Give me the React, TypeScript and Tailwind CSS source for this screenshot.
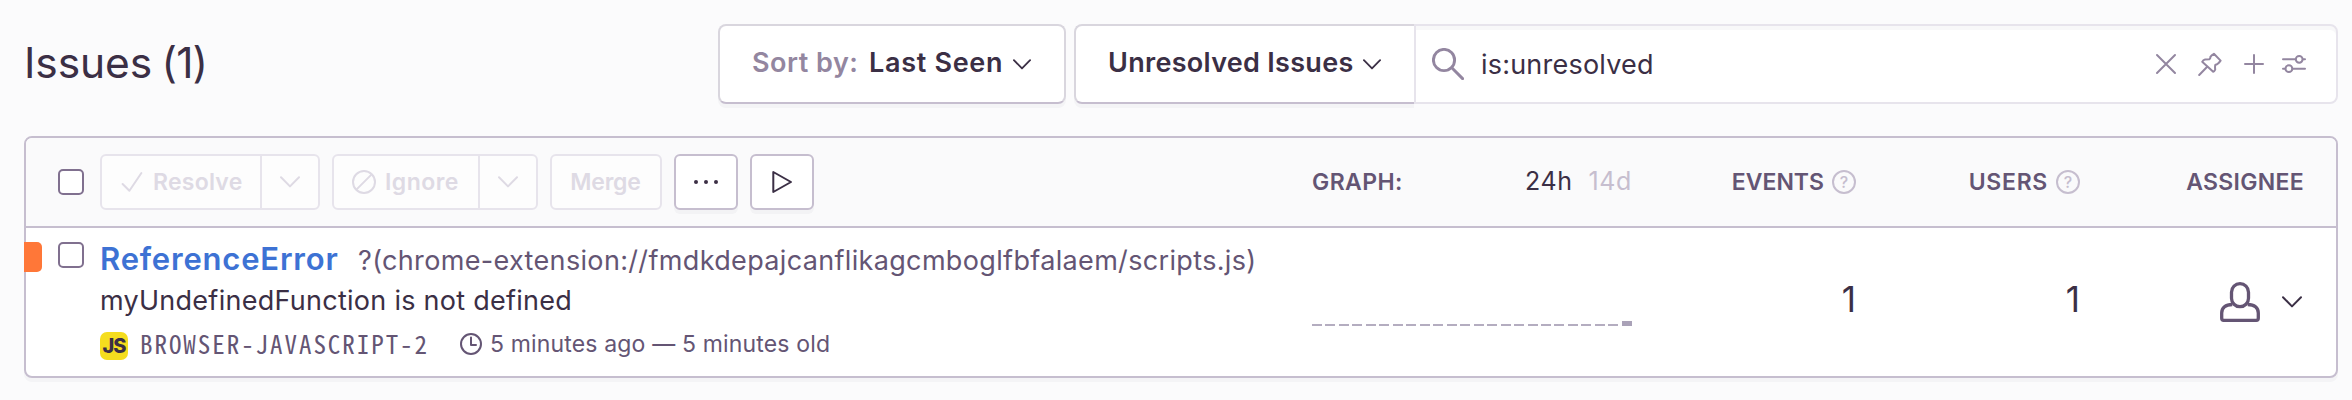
import React from "react";

function Chevron({ className, width = 20, height = 12 }: { className?: string; width?: number; height?: number }) {
  return (
    <svg viewBox="0 0 20 12" width={width} height={height} className={className} fill="none" stroke="currentColor" strokeWidth="2" strokeLinecap="round" strokeLinejoin="round">
      <path d="M1 1.2 L10 10.4 L19 1.2" />
    </svg>
  );
}

function Help() {
  return (
    <span className="flex size-6 items-center justify-center rounded-full border-2 border-[#c6becf] text-[16px] leading-none font-medium tracking-normal text-[#c6becf]">
      ?
    </span>
  );
}

function Checkbox() {
  return <span className="block size-[26px] shrink-0 rounded-[5px] border-2 border-[#80708f] bg-white" />;
}

function Toolbar() {
  return (
    <div className="flex gap-3 text-[23px] font-semibold text-[#dedae4]">
      <div className="flex h-14 w-[220px] rounded-md border-2 border-[#e7e4ec] bg-[#fdfdfd]">
        <div className="flex w-[158px] items-center gap-[9px] pl-[18px]">
          <svg viewBox="0 0 24 24" className="size-6" fill="none" stroke="currentColor" strokeWidth="2" strokeLinecap="round" strokeLinejoin="round">
            <path d="M2.6 14 L9.4 20.8 L21.4 3" />
          </svg>
          <span className="tracking-[0.24px]">Resolve</span>
        </div>
        <div className="flex flex-1 items-center justify-center border-l-2 border-[#e7e4ec]">
          <Chevron />
        </div>
      </div>
      <div className="flex h-14 w-[206px] rounded-md border-2 border-[#e7e4ec] bg-[#fdfdfd]">
        <div className="flex w-[144px] items-center gap-[9px] pl-[18px]">
          <svg viewBox="0 0 24 24" className="size-6" fill="none" stroke="currentColor" strokeWidth="2" strokeLinecap="round">
            <circle cx="12" cy="12" r="11" />
            <path d="M4.6 19.4 L19.4 4.6" />
          </svg>
          <span className="tracking-[0.45px]">Ignore</span>
        </div>
        <div className="flex flex-1 items-center justify-center border-l-2 border-[#e7e4ec]">
          <Chevron />
        </div>
      </div>
      <div className="flex h-14 w-[112px] items-center justify-center rounded-md border-2 border-[#e7e4ec] bg-[#fdfdfd] pr-px tracking-[-0.2px]">
        Merge
      </div>
      <div className="flex h-14 w-16 items-center justify-center gap-[6px] rounded-md border-2 border-[#c6becf] bg-white shadow-[0_4px_0_rgba(43,34,51,0.03)]">
        <i className="size-1 rounded-full bg-[#3b2f45]" />
        <i className="size-1 rounded-full bg-[#3b2f45]" />
        <i className="size-1 rounded-full bg-[#3b2f45]" />
      </div>
      <div className="flex h-14 w-16 items-center justify-center rounded-md border-2 border-[#c6becf] bg-white text-[#3b2f45] shadow-[0_4px_0_rgba(43,34,51,0.03)]">
        <svg viewBox="0 0 24 24" className="size-6" fill="none" stroke="currentColor" strokeWidth="2" strokeLinejoin="round">
          <path d="M3.3 2 V22 L21 12 Z" />
        </svg>
      </div>
    </div>
  );
}

function SearchBar() {
  return (
    <div className="flex h-20 flex-1 items-center rounded-r-lg border-2 border-[#e7e4ec] bg-white shadow-[inset_0_4px_0_rgba(43,34,51,0.03)]">
      <svg viewBox="0 0 32 32" className="ml-4 size-8 text-[#9386a0]" fill="none" stroke="currentColor" strokeWidth="2.9" strokeLinecap="round">
        <circle cx="12" cy="12" r="10.6" />
        <path d="M19.8 19.8 L30.6 30.6" />
      </svg>
      <span className="ml-[17px] flex-1 pt-[2px] text-[27px] tracking-[0.21px]">is:unresolved</span>
      <div className="flex items-center pr-[30px] text-[#9386a0]">
        <svg viewBox="0 0 24 24" className="size-6" fill="none" stroke="currentColor" strokeWidth="2" strokeLinecap="round">
          <path d="M3 3 L21 21 M21 3 L3 21" />
        </svg>
        <svg viewBox="0 0 24 24" className="ml-5 size-6" fill="none" stroke="currentColor" strokeWidth="2" strokeLinecap="round" strokeLinejoin="round">
          <path d="M15.9 1.8 L22.6 8.6 Q19.8 12.6 17.4 12.8 Q16.8 14 17.2 17.6 Q16.2 19.6 15.2 19.8 L4.2 9.8 Q5.2 7.6 7 7.4 L11.4 7.2 Q12.6 6.2 12.4 4.9 Q13.6 3.2 15.9 1.8 Z M9.2 14.8 L1.2 23" />
        </svg>
        <svg viewBox="0 0 24 24" className="ml-5 size-6" fill="none" stroke="currentColor" strokeWidth="2" strokeLinecap="round">
          <path d="M12 3 V21 M3 12 H21" />
        </svg>
        <svg viewBox="0 0 24 24" className="ml-4 size-6" fill="none" stroke="currentColor" strokeWidth="2" strokeLinecap="round">
          <path d="M1 7.3 H13.4 M20.8 7.3 H23 M1 16.7 H3.2 M10.6 16.7 H23" />
          <circle cx="17.2" cy="7.3" r="3.4" />
          <circle cx="6.9" cy="16.7" r="3.4" />
        </svg>
      </div>
    </div>
  );
}

const hours = Array.from({ length: 24 }, (_, hour) => (hour === 23 ? 1 : 0));

export default function App() {
  return (
    <div className="h-[400px] w-[2352px] overflow-hidden bg-[#fbfbfc] pt-6 pr-[14px] pl-6 font-['Inter',sans-serif] text-[#3b2f45]">
      <div className="flex h-20">
        <h1 className="w-[694px] text-[42.5px] leading-[78px] font-normal tracking-[-0.9px] [word-spacing:-1.5px]">
          <span className="tracking-[-0.1px]">Issues</span> (1)
        </h1>
        <div className="flex h-20 w-[348px] items-center rounded-lg border-2 border-[#d9d6de] border-b-[#c6becf] bg-white pb-px pl-8 text-[27px] font-semibold shadow-[0_4px_0_rgba(43,34,51,0.03)]">
          <span className="w-[117px] tracking-[0.5px] text-[#9386a0]">Sort by:</span>
          <span className="w-[144px] tracking-[0.7px]">Last Seen</span>
          <Chevron width={18} height={11} className="mt-px" />
        </div>
        <div className="ml-2 flex h-20 w-[340px] items-center rounded-l-lg border-2 border-r-0 border-[#d9d6de] border-b-[#c6becf] bg-white pb-px pl-8 text-[27px] font-semibold shadow-[0_4px_0_rgba(43,34,51,0.03)]">
          <span className="w-[255px] tracking-[0.3px]">Unresolved Issues</span>
          <Chevron width={18} height={11} className="mt-px" />
        </div>
        <SearchBar />
      </div>

      <div className="mt-8 h-[242px] rounded-lg border-2 border-[#c6becf] bg-white shadow-[0_4px_0_rgba(43,34,51,0.03)]">
        <div className="flex h-[90px] items-center rounded-t-md border-b-2 border-[#c6becf] bg-[#fafafb] pr-8 pl-8 text-[23px] font-semibold text-[#645574]">
          <Checkbox />
          <div className="ml-4 flex-1">
            <Toolbar />
          </div>
          <div className="flex w-[320px] items-center">
            <span className="w-[214px] tracking-[0.4px]">GRAPH:</span>
            <span className="w-[64px] text-[25px] font-normal tracking-[0.7px] text-[#3b2f45]">24h</span>
            <span className="text-[25px] font-normal tracking-[0.6px] text-[#c6becf]">14d</span>
          </div>
          <div className="flex w-56 items-center justify-end gap-2">
            <span>EVENTS</span>
            <Help />
          </div>
          <div className="flex w-56 items-center justify-end gap-2">
            <span className="tracking-[0.7px]">USERS</span>
            <Help />
          </div>
          <div className="w-56 text-right tracking-[0.3px]">ASSIGNEE</div>
        </div>

        <div className="flex h-[148px] items-start pr-8">
          <div className="mt-[14px] -ml-[2px] h-[30px] w-[18px] rounded-r-[5px] bg-[#ff7738]" />
          <div className="mt-[14px] ml-4">
            <Checkbox />
          </div>
          <div className="ml-4 flex-1 pt-[11px]">
            <div className="flex h-10 items-baseline whitespace-nowrap">
              <span className="w-[258px] text-[31px] leading-10 font-semibold tracking-[0.8px] text-[#3d72d4]">ReferenceError</span>
              <span className="text-[27px] leading-10 tracking-[0.34px] text-[#645574]">
                ?(chrome-extension://fmdkdepajcanflikagcmboglfbfalaem/scripts.js)
              </span>
            </div>
            <div className="h-10 pt-[2px] text-[27px] leading-10 tracking-[0.27px]">myUndefinedFunction is not defined</div>
            <div className="mt-px flex h-[72px] items-start text-[#645574]">
              <div className="mt-3 flex size-7 items-center justify-center rounded-[7px] bg-[#f5dd1e] text-[20px] leading-none font-extrabold tracking-[-1px] text-[#3b2f45]">
                JS
              </div>
              <span className="ml-3 w-[319px] pt-[3px] font-['Noto_Sans_Mono_CJK_SC','DejaVu_Sans_Mono',monospace] text-[25px] leading-10 tracking-[1.95px]">
                BROWSER-JAVASCRIPT-2
              </span>
              <svg viewBox="0 0 24 24" className="mt-[12px] size-6" fill="none" stroke="currentColor" strokeWidth="2" strokeLinecap="round" strokeLinejoin="round">
                <circle cx="12" cy="12" r="10" />
                <path d="M12 5.5 V13 H17" />
              </svg>
              <span className="ml-[7px] pt-1 text-[23px] leading-10 tracking-[0.16px]">5 minutes ago — 5 minutes old</span>
            </div>
          </div>
          <div className="flex h-[98px] w-[320px] items-end justify-between">
            {hours.map((count, hour) => (
              <i key={hour} className={count ? "h-[5px] w-[10px] bg-[#aaa2b8]" : "h-[2px] w-[10px] bg-[#b4adc0]"} />
            ))}
          </div>
          <div className="flex h-full w-56 items-center justify-end pb-[5px] text-[35px]">1</div>
          <div className="flex h-full w-56 items-center justify-end pb-[5px] text-[35px]">1</div>
          <div className="flex h-full w-56 items-center justify-end gap-[22px] pr-[2px]">
            <svg viewBox="0 0 40 40" className="size-10 text-[#645574]" fill="none" stroke="currentColor" strokeWidth="3.3" strokeLinejoin="round">
              <rect x="11.5" y="1.7" width="17" height="23" rx="8.5" />
              <path d="M12.3 22.5 C5.5 22.5 1.7 25.8 1.7 31 V36.3 Q1.7 38.3 3.7 38.3 H36.3 Q38.3 38.3 38.3 36.3 V31 C38.3 25.8 34.5 22.5 27.7 22.5" />
            </svg>
            <Chevron />
          </div>
        </div>
      </div>
    </div>
  );
}
